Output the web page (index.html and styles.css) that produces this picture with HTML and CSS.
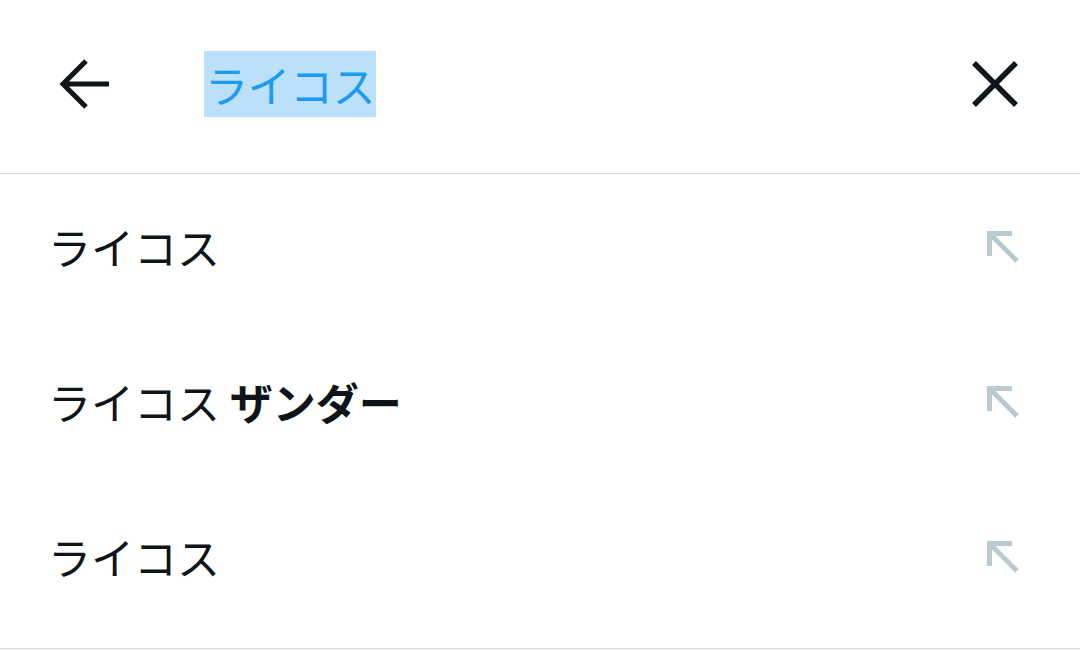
FILE: index.html
```html
<!DOCTYPE html>
<html lang="ja">
<head>
<meta charset="utf-8">
<link rel="stylesheet" href="styles.css">
</head>
<body>
<div class="page">
  <header class="header">
    <div class="back">
      <svg width="60" height="60" viewBox="0 0 60 60"><path d="M8 30 H54 M31 7 L8 30 L31 53" fill="none" stroke="#0f1419" stroke-width="5"/></svg>
    </div>
    <div class="query"><span class="sel">ライコス</span></div>
    <div class="close">
      <svg width="48" height="48" viewBox="0 0 48 48"><path d="M3 3 L45 45 M45 3 L3 45" fill="none" stroke="#0f1419" stroke-width="5.5"/></svg>
    </div>
  </header>
  <ul class="list">
    <li class="row"><span class="txt">ライコス</span><svg class="fill" width="40" height="40" viewBox="0 0 40 40"><path d="M9.5 29 V6.5 H32 M9.5 6.5 L37 34" fill="none" stroke="#b9cad2" stroke-width="5"/></svg></li>
    <li class="row"><span class="txt">ライコス <b>ザンダー</b></span><svg class="fill" width="40" height="40" viewBox="0 0 40 40"><path d="M9.5 29 V6.5 H32 M9.5 6.5 L37 34" fill="none" stroke="#b9cad2" stroke-width="5"/></svg></li>
    <li class="row"><span class="txt">ライコス</span><svg class="fill" width="40" height="40" viewBox="0 0 40 40"><path d="M9.5 29 V6.5 H32 M9.5 6.5 L37 34" fill="none" stroke="#b9cad2" stroke-width="5"/></svg></li>
  </ul>
</div>
</body>
</html>
```
FILE: styles.css
```css
* { box-sizing: border-box; }
html, body { margin: 0; padding: 0; background: #ffffff; }
body { font-family: "Noto Sans CJK JP", "Noto Sans", sans-serif; color: #0f1419; }
.page { width: 1080px; height: 650px; overflow: hidden; }
.header {
  height: 174px;
  border-bottom: 1px solid #d4d6d6;
  display: flex;
  align-items: center;
  padding-bottom: 6px;
}
.back { width: 204px; display: flex; padding-left: 55px; }
.back svg { display: block; }
.query { flex: 1; display: flex; }
.sel {
  display: inline-block;
  height: 66px;
  line-height: 66px;
  padding: 0 1px 0 1px;
  background: #bbe0f9;
  color: #1d9bf0;
  font-size: 43px;
  letter-spacing: -0.5px;
}
.close { width: 48px; margin-right: 61px; display: flex; }
.close svg { display: block; }
.list {
  list-style: none;
  margin: 0;
  padding: 0 0 9px 0;
  border-bottom: 1px solid #cfd9de;
}
.row {
  height: 155px;
  display: flex;
  align-items: center;
  justify-content: space-between;
  padding: 0 60px 0 48px;
  font-size: 43px;
}
.txt { line-height: 1; padding-bottom: 10px; }
.txt b { font-weight: 700; }
.row svg { display: block; margin-bottom: 10px; }
```
